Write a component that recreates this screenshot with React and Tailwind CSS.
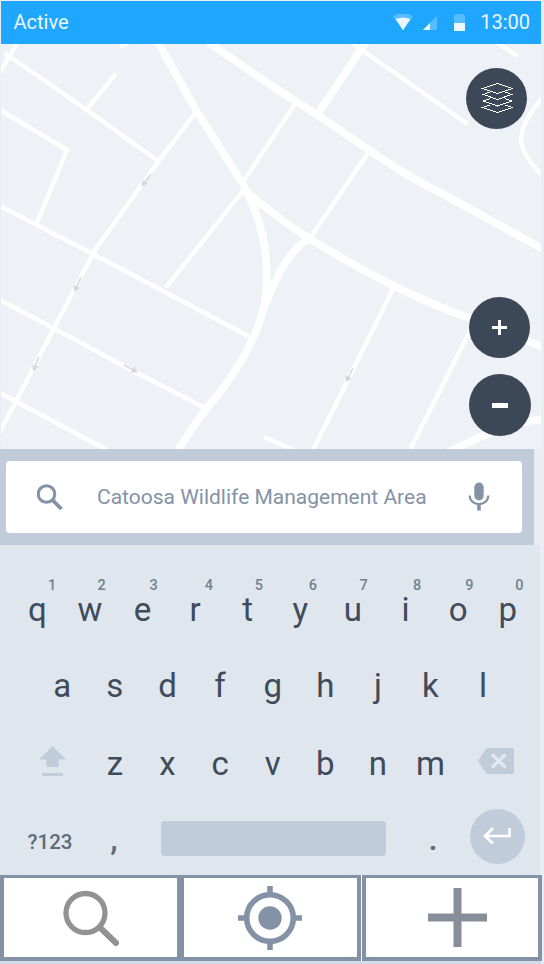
import React from 'react';

const minorRoads = [
  'M18 42L0 72',
  'M6 54L87 110L158 161',
  'M115 75L87 109',
  'M122 46L128 43',
  'M0 110L67 150L37 223',
  'M0 206L93 254L252 338',
  'M195 113L158 162L103 239Q97 246 93 254L54 328L0 432',
  'M352 43L466 123',
  'M496 42L516 55',
  'M543 97C514 130 514 149 543 176',
  'M295 104L243 182',
  'M242 192L167 286',
  'M368 153L310 238',
  'M394 287L313 450',
  'M470 331L410 450',
  'M266 438L292 449',
  'M0 300L55 329L137 373L207 409',
  'M0 393L17 402L107 450',
];

const majorRoads = [
  'M158 42L196 110L243 184C262 222 267 248 267 280C267 325 238 372 207 408Q190 430 177 452',
  'M208 42L272 86L319 116L369 150Q410 178 438 191.5L543 249',
  'M366 42L317 115',
  'M245 190Q275 217 310 239Q350 264 394 286Q430 304 469 318L543 347',
  'M310 238C290 250 279 272 271 291L265 306',
];

const oneWays = [
  [151, 174, 142, 186],
  [81, 277, 74.5, 291],
  [39, 356, 33.5, 370.5],
  [124, 365, 137, 372],
  [353, 368, 346.5, 381.5],
];

function OneWay({ at: [x1, y1, x2, y2] }) {
  const angle = (Math.atan2(y2 - y1, x2 - x1) * 180) / Math.PI;
  return (
    <g transform={`translate(${x2} ${y2}) rotate(${angle})`} fill="#d6d6d6" stroke="#d6d6d6">
      <path d="M-15 0H-4" strokeWidth="1.4" />
      <path d="M0.5 0L-5 -2.8V2.8Z" strokeWidth="0.5" />
    </g>
  );
}

function MapDrawing() {
  return (
    <svg className="block h-full w-full" viewBox="1 44 540 405" fill="none">
      <g stroke="#fff" strokeWidth="4.4" strokeLinecap="round">
        {minorRoads.map((d) => <path key={d} d={d} />)}
      </g>
      <g stroke="#fff" strokeWidth="7.6">
        {majorRoads.map((d) => <path key={d} d={d} />)}
        <path d="M446 453L485 435Q515 422 543 419" />
      </g>
      {oneWays.map((a) => <OneWay key={a.join()} at={a} />)}
    </svg>
  );
}

function StatusBar() {
  return (
    <header className="flex h-[43px] w-[540px] shrink-0 items-center bg-[#1fa7ff] pl-[12.5px] pr-[11px] text-[20px] text-[#eaf6ff]">
      <span className="grow pb-px">Active</span>
      <svg className="mr-[10px] h-[18px] w-[20px]" viewBox="393 13 20 18">
        <path d="M393 15.5Q403 9 413 15.5L403 29Z" fill="#57bdff" />
        <path d="M395.6 18Q403 15 410.4 18L403 29.2Z" fill="#ebf7ff" />
      </svg>
      <svg className="mr-[16px] h-[18px] w-[15px]" viewBox="424 13 15 18">
        <path d="M424 29L438 14.8V29Z" fill="#57bdff" />
        <path d="M424 29L431 22V29Z" fill="#ebf7ff" />
      </svg>
      <svg className="mr-[15px] h-[18px] w-[11px]" viewBox="455 13 11 18">
        <path d="M455 14.5L457 13H464L466 14.5V22H455Z" fill="#57bdff" />
        <path d="M455 22H466V30H455Z" fill="#ebf7ff" />
      </svg>
      <span className="pb-px">13:00</span>
    </header>
  );
}

function LayersIcon() {
  return (
    <svg className="h-[32px] w-[32px]" viewBox="481 83 32 32" fill="none" stroke="#fff" strokeWidth="1" shapeRendering="crispEdges">
      <path d="M482.5 88.5L497.5 83.5L512.5 88.5L497.5 93.5Z" />
      <path d="M490 92L483.5 94.5L497.5 99.5L511.5 94.5L505 92" />
      <path d="M490 98.5L483.5 101L497.5 106L511.5 101L505 98.5" />
      <path d="M490 105L482.5 107.5L497.5 112.5L512.5 107.5L505 105" />
    </svg>
  );
}

const topKeys = [
  ['q', '1', 'left-[33px]'],
  ['w', '2', 'left-[30px]'],
  ['e', '3', 'left-[29.5px]'],
  ['r', '4', 'left-[32px]'],
  ['t', '5', 'left-[29.5px]'],
  ['y', '6', 'left-[31px]'],
  ['u', '7', 'left-[29px]'],
  ['i', '8', 'left-[30px]'],
  ['o', '9', 'left-[29.5px]'],
  ['p', '0', 'left-[27px]'],
];

function Key({ children, className = '' }) {
  return <span className={`w-[52.6px] shrink-0 text-center ${className}`}>{children}</span>;
}

function Keyboard() {
  return (
    <section className="h-[330px] w-[540px] shrink-0 bg-[#dfe6ee] text-[33px] leading-[40px] text-[#3f4b5b]">
      <div className="flex h-[84px] pl-[11px] pt-[48px] leading-[34px]">
        {topKeys.map(([k, n, at]) => (
          <Key key={k} className={`relative ${k === 'p' ? 'pr-[6px]' : ''}`}>
            {k}
            <span className={`absolute -top-[15px] w-4 text-center text-[14.5px] font-medium leading-[16px] text-[#71828c] ${at}`}>{n}</span>
          </Key>
        ))}
      </div>
      <div className="flex h-[77px] pl-[36px] pt-[37px]">
        {'asdfghjkl'.split('').map((k) => <Key key={k}>{k}</Key>)}
      </div>
      <div className="flex h-[78px] pl-[36px] pt-[38px]">
        <span className="w-[52.6px] shrink-0">
          <svg className="ml-[3px] mt-[2px] h-[30px] w-[27px]" viewBox="39 746 27 30" fill="#c0ccda">
            <path d="M52.5 746L66 759.5H58.7V767H46.3V759.5H39Z" />
            <path d="M42 773H63V776H42Z" />
          </svg>
        </span>
        {'zxcvbnm'.split('').map((k) => <Key key={k}>{k}</Key>)}
        <svg className="ml-[21px] mt-[4px] h-[26px] w-[36px]" viewBox="478 748 36 26">
          <path d="M478 761L485.5 749.5Q486.5 748 488 748H512Q514 748 514 750V772Q514 774 512 774H488Q486.5 774 485.5 772.5Z" fill="#c0ccda" />
          <path d="M492 754.5L505.5 767.5M505.5 754.5L492 767.5" stroke="#e3e9f0" strokeWidth="3.2" />
        </svg>
      </div>
      <div className="flex h-[91px] pt-[25px]">
        <span className="mt-[18px] w-[100px] text-center text-[20.5px] font-medium leading-[30px] text-[#5e6b7b]">?123</span>
        <span className="ml-px mt-[10px] w-[26px] text-center font-medium text-[#5e6b7b]">,</span>
        <span className="ml-[34px] mt-[12px] h-[35px] w-[225px] rounded-[4px] bg-[#c0ccda]" />
        <span className="ml-[34px] mt-[10px] w-[26px] text-center font-medium text-[#5e6b7b]">.</span>
        <span className="ml-[24px] flex size-[55px] items-center justify-center rounded-full bg-[#c0ccda]">
          <svg className="mb-[2px] mr-[2px] h-[17px] w-[28px]" viewBox="483 827.5 28 17" fill="none" stroke="#fff" strokeWidth="2.7">
            <path d="M509.5 828.5V836.5H485M493 828.7L485 836.5L493 844" />
          </svg>
        </span>
      </div>
    </section>
  );
}

function App() {
  return (
    <main className="flex h-[964px] w-[544px] flex-col overflow-hidden bg-[#e9edf4] font-['Roboto',sans-serif]">
      <div className="h-px shrink-0 bg-[#edf0f4]" />
      <div className="ml-px">
        <StatusBar />
      </div>
      <section className="relative ml-px h-[405px] w-[540px] shrink-0 bg-[#eef1f6]">
        <MapDrawing />
        <button className="absolute left-[465px] top-[24px] flex size-[61px] items-center justify-center rounded-full bg-[#3c4858]">
          <LayersIcon />
        </button>
        <button className="absolute left-[468px] top-[253px] flex size-[61px] items-center justify-center rounded-full bg-[#3c4858]">
          <svg className="size-[15px]" viewBox="0 0 15 15" stroke="#fff" strokeWidth="3">
            <path d="M0 7.5H15M7.5 0V15" />
          </svg>
        </button>
        <button className="absolute left-[468px] top-[330px] flex size-[62px] items-center justify-center rounded-full bg-[#3c4858]">
          <span className="h-[5px] w-[16px] bg-white" />
        </button>
      </section>
      <section className="flex h-[96px] w-[534px] shrink-0 items-center bg-[#c0ccda] pl-[6px]">
        <div className="flex h-[72px] w-[516px] items-center rounded-[4px] bg-white text-[#8492a6]">
          <svg className="ml-[31px] size-[26px]" viewBox="37 484 26 26" fill="none" stroke="#8492a6">
            <circle cx="46.5" cy="494" r="8.3" strokeWidth="3" />
            <path d="M52.5 500L61.5 509" strokeWidth="3.8" />
          </svg>
          <span className="ml-[34px] w-[340px] whitespace-nowrap pt-[2px] text-[21px]">Catoosa Wildlife Management Area</span>
          <svg className="ml-[31px] h-[28px] w-[22px]" viewBox="468 482.5 22 28" overflow="visible" fill="none" stroke="#8492a6">
            <rect x="474.3" y="482" width="9.4" height="18" rx="4.7" fill="#8492a6" stroke="none" />
            <path d="M469.7 495C469.7 506.5 488.3 506.5 488.3 495" strokeWidth="2.2" />
            <path d="M479 503.5V510" strokeWidth="3.6" />
          </svg>
        </div>
      </section>
      <Keyboard />
      <nav className="flex h-[86px] w-[542px] shrink-0 bg-white">
        <button className="flex w-[180px] items-center justify-center border-b-4 border-l-4 border-r-[3px] border-t-[3px] border-[#8492a6] bg-white">
          <svg className="ml-[2px] mt-[1px] size-[57px]" viewBox="63 890 57 57" fill="none" stroke="#929292" strokeLinecap="round">
            <circle cx="85.5" cy="913" r="19.5" strokeWidth="5.3" />
            <path d="M100 927.5L116 943" strokeWidth="6" />
          </svg>
        </button>
        <button className="flex w-[181px] items-center justify-center border-x-4 border-b-4 border-t-[3px] border-[#8492a6] bg-white">
          <svg className="mr-[2px] size-[64px]" viewBox="238 886 64 64" fill="none" stroke="#8492a6">
            <circle cx="270" cy="918" r="23.3" strokeWidth="5.6" />
            <circle cx="270" cy="918" r="11.7" fill="#8492a6" stroke="none" />
            <path d="M270 886V893M270 943V950M238 918H245M295 918H302" strokeWidth="5.6" />
          </svg>
        </button>
        <button className="ml-px flex w-[180px] items-center justify-center border-4 border-t-[3px] border-[#8492a6] bg-white">
          <svg className="ml-[10px] size-[59px]" viewBox="0 0 59 59" stroke="#868e9a" strokeWidth="8">
            <path d="M0 29.5H59M29.5 0V59" />
          </svg>
        </button>
      </nav>
      <div className="h-[3px] w-[541px] bg-[#d3dce6]" />
    </main>
  );
}

export default App;
